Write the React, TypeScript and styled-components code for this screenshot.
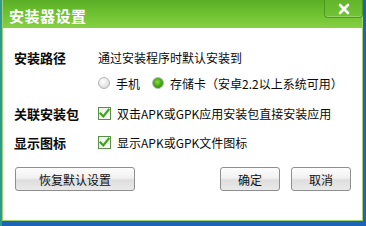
import React from 'react';
import styled, { createGlobalStyle } from 'styled-components';

const GlobalStyle = createGlobalStyle`
  html, body {
    margin: 0;
    padding: 0;
  }
  body {
    width: 366px;
    height: 226px;
    overflow: hidden;
    background: linear-gradient(to right, #2f9a8e 0, #2f9a8e 2px, #1d63b8 2px);
    font-family: "Noto Sans CJK SC", "Noto Sans", sans-serif;
  }
`;

const Dialog = styled.div`
  margin-left: 2px;
  width: 361px;
  height: 221px;
  box-sizing: border-box;
  border: 1px solid #9fd26f;
  border-top: none;
  background: #fff;
  display: flex;
  flex-direction: column;
`;

const TitleBar = styled.div`
  height: 28px;
  flex: none;
  background: linear-gradient(to bottom, #5aae25 0%, #6fc232 50%, #86d044 100%);
  display: flex;
  align-items: center;
  justify-content: space-between;
  padding-left: 6px;
`;

const Title = styled.div`
  color: #fff;
  font-size: 15px;
  font-weight: 700;
  letter-spacing: 0.5px;
  margin-top: 2px;
`;

const CloseButton = styled.button`
  align-self: flex-start;
  width: 39px;
  height: 18px;
  margin-right: -1px;
  padding: 0;
  border: 1px solid #4b9a20;
  border-top: none;
  border-radius: 0 0 4px 4px;
  background: linear-gradient(to bottom, #62b52b, #72c435);
  box-shadow: inset 0 -1px 0 rgba(255, 255, 255, 0.25);
  display: flex;
  align-items: center;
  justify-content: center;
`;

const Body = styled.div`
  flex: 1;
  display: flex;
  flex-direction: column;
  padding: 16px 10px 0 10px;
`;

const Form = styled.div`
  display: grid;
  grid-template-columns: 85px 1fr;
  align-items: center;
  font-size: 12px;
  color: #0a0a0a;
  white-space: nowrap;
`;

const Label = styled.div<{ $h: number }>`
  font-weight: 700;
  font-size: 13px;
  padding-left: 1px;
  height: ${({ $h }) => $h}px;
  display: flex;
  align-items: center;
`;

const Cell = styled.div<{ $h: number }>`
  height: ${({ $h }) => $h}px;
  display: flex;
  align-items: center;
  gap: 6px;
`;

const Option = styled.label`
  display: flex;
  align-items: center;
  gap: 6px;
  margin-right: 6px;
`;

const RadioDot = styled.span<{ $on?: boolean }>`
  width: 12px;
  height: 12px;
  border-radius: 50%;
  box-sizing: border-box;
  border: 1px solid #b4b4b4;
  background: ${({ $on }) =>
    $on
      ? 'radial-gradient(circle at 45% 40%, #8fdc48 0, #4fb21a 40%, #34910f 72%, #e4e4e4 78%, #f4f4f4 100%)'
      : 'radial-gradient(circle at 40% 35%, #ffffff 0, #e6e6e6 55%, #cfcfcf 100%)'};
`;

const CheckBox = styled.span`
  width: 13px;
  height: 13px;
  box-sizing: border-box;
  border: 1px solid #5a8f46;
  background: linear-gradient(to bottom right, #e9efe6, #ffffff);
  display: flex;
  align-items: center;
  justify-content: center;
`;

const Footer = styled.div`
  display: flex;
  align-items: center;
  margin-top: 13px;
  padding: 0 0 0 2px;
`;

const Button = styled.button<{ $w: number }>`
  width: ${({ $w }) => $w}px;
  height: 24px;
  box-sizing: border-box;
  border: 1px solid #8e8e8e;
  border-radius: 3px;
  background: linear-gradient(to bottom, #fdfdfd 0%, #f1f1f1 45%, #dedede 55%, #e9e9e9 100%);
  font-family: "Noto Sans CJK SC", "Noto Sans", sans-serif;
  font-size: 12px;
  color: #111;
  padding: 0;
`;

const Spacer = styled.div`
  flex: 1;
`;

const ButtonGroup = styled.div`
  display: flex;
  gap: 11px;
  margin-right: 1px;
`;

const Check = () => (
  <svg width="11" height="11" viewBox="0 0 11 11">
    <path d="M1.5 5.5 L4.3 8.4 L9.6 1.8" fill="none" stroke="#3aa418" strokeWidth="2.2" strokeLinecap="square" />
  </svg>
);

const App = () => (
  <>
    <GlobalStyle />
    <Dialog>
      <TitleBar>
        <Title>安装器设置</Title>
        <CloseButton aria-label="关闭">
          <svg width="12" height="12" viewBox="0 0 12 12">
            <path d="M2 2 L10 10 M10 2 L2 10" stroke="#fff" strokeWidth="2.6" strokeLinecap="round" />
          </svg>
        </CloseButton>
      </TitleBar>
      <Body>
        <Form>
          <Label $h={26}>安装路径</Label>
          <Cell $h={26}>通过安装程序时默认安装到</Cell>
          <div />
          <Cell $h={26}>
            <Option>
              <RadioDot />
              手机
            </Option>
            <Option>
              <RadioDot $on />
              存储卡（安卓2.2以上系统可用）
            </Option>
          </Cell>
          <Label $h={34}>关联安装包</Label>
          <Cell $h={34}>
            <CheckBox>
              <Check />
            </CheckBox>
            双击APK或GPK应用安装包直接安装应用
          </Cell>
          <Label $h={24}>显示图标</Label>
          <Cell $h={24}>
            <CheckBox>
              <Check />
            </CheckBox>
            显示APK或GPK文件图标
          </Cell>
        </Form>
        <Footer>
          <Button $w={120}>恢复默认设置</Button>
          <Spacer />
          <ButtonGroup>
            <Button $w={60}>确定</Button>
            <Button $w={60}>取消</Button>
          </ButtonGroup>
        </Footer>
      </Body>
    </Dialog>
  </>
);

export default App;
